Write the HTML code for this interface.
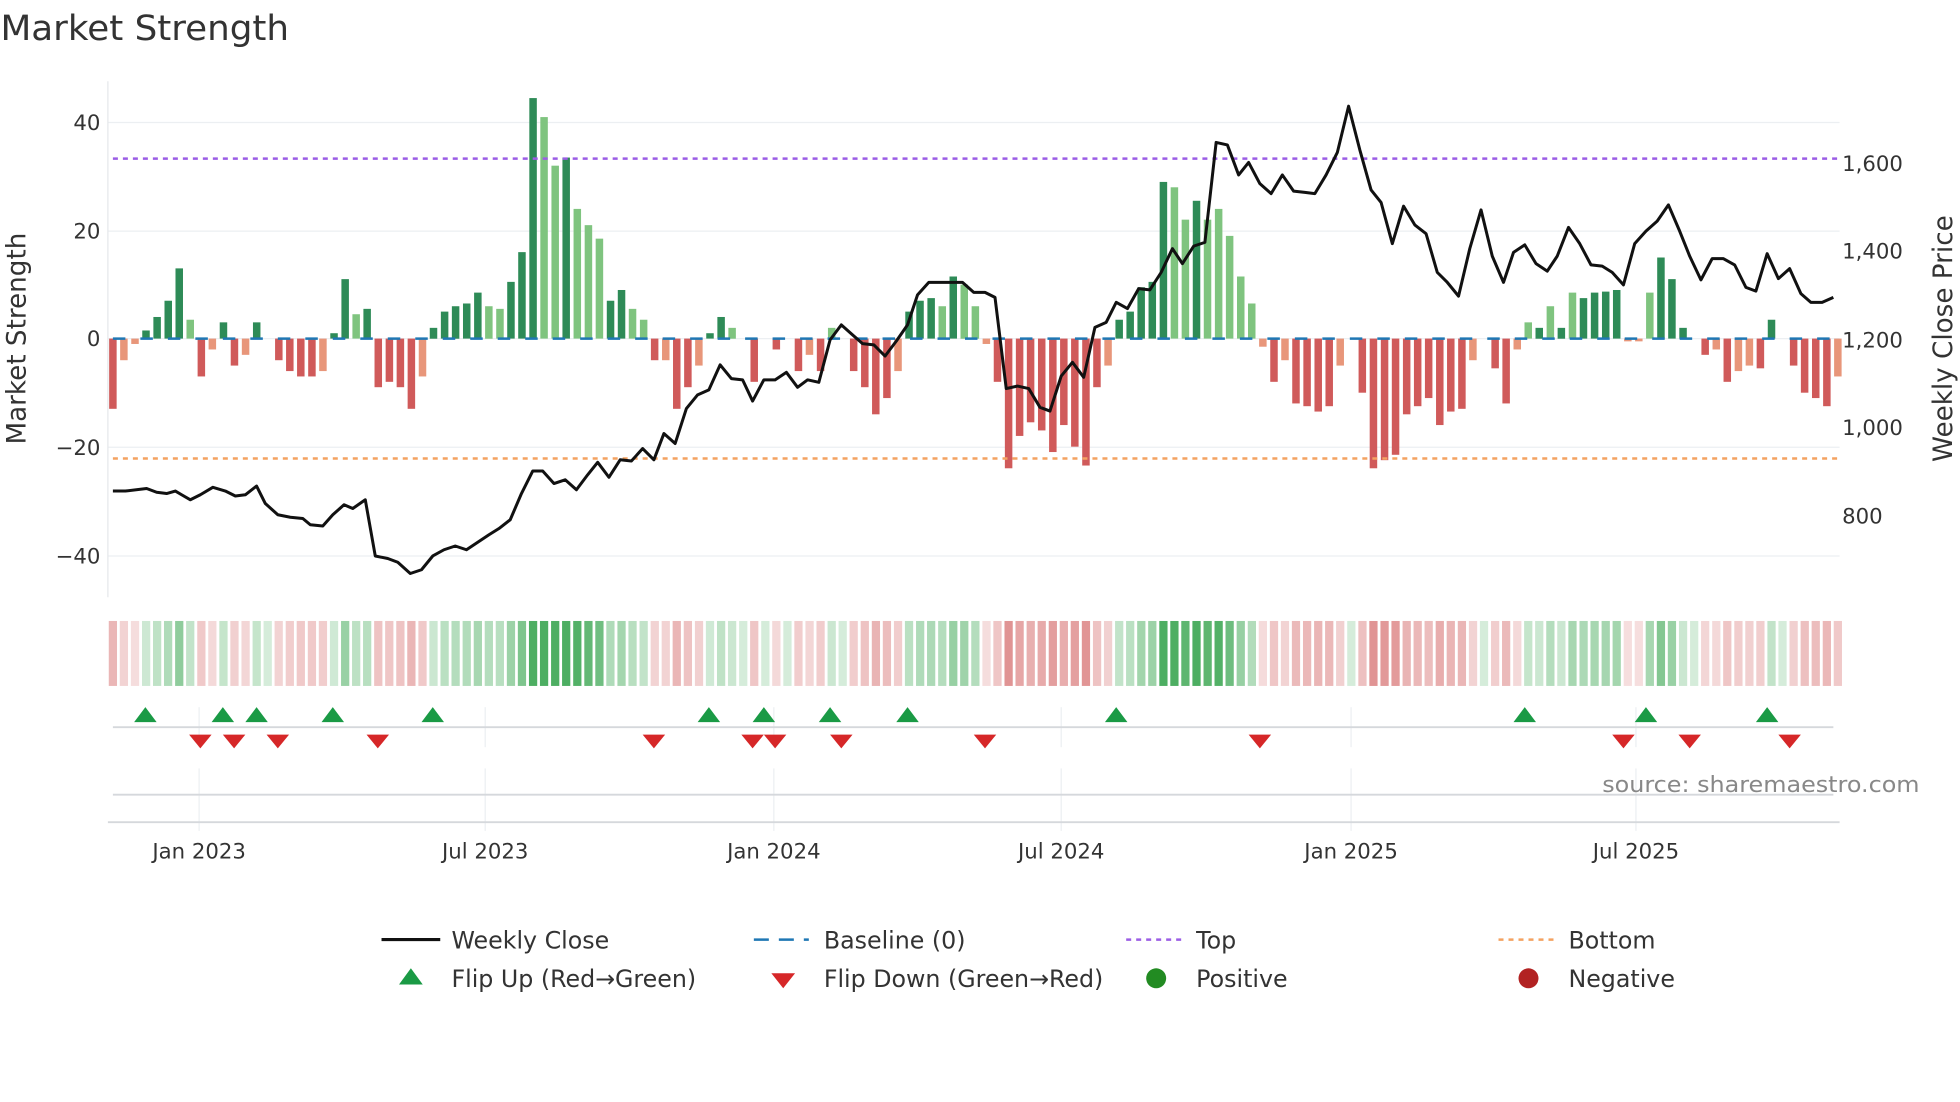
<!DOCTYPE html>
<html><head><meta charset="utf-8"><style>
html,body{margin:0;padding:0;background:#fff;width:1960px;height:1102px;overflow:hidden}
svg text{font-family:"DejaVu Sans","Liberation Sans",sans-serif;fill:#333}
</style></head><body>
<svg id="s" width="1960" height="1102" viewBox="0 0 1568 882" xmlns="http://www.w3.org/2000/svg"></svg>
<script>
var V=[-13,-4,-1,1.5,4,7,13,3.5,-7,-2,3,-5,-3,3,0,-4,-6,-7,-7,-6,1,11,4.5,5.5,-9,-8,-9,-13,-7,2,5,6,6.5,8.5,6,5.5,10.5,16,44.5,41,32,33.5,24,21,18.5,7,9,5.5,3.5,-4,-4,-13,-9,-5,1,4,2,0,-8,0,-2,0,-6,-3,-6,2,0,-6,-9,-14,-11,-6,5,7,7.5,6,11.5,10,6,-1,-8,-24,-18,-15.5,-17,-21,-16,-20,-23.5,-9,-5,3.5,5,9.5,10.5,29,28,22,25.5,22,24,19,11.5,6.5,-1.5,-8,-4,-12,-12.5,-13.5,-12.5,-5,0,-10,-24,-22.5,-21.5,-14,-12.5,-11,-16,-13.5,-13,-4,0,-5.5,-12,-2,3,2,6,2,8.5,7.5,8.5,8.7,9,-0.5,-0.5,8.5,15,11,2,0,-3,-2,-8,-6,-5,-5.5,3.5,0,-5,-10,-11,-12.5,-7];
var light={7:1,22:1,34:1,35:1,39:1,40:1,42:1,43:1,44:1,47:1,48:1,56:1,65:1,75:1,77:1,78:1,96:1,97:1,99:1,100:1,101:1,102:1,103:1,128:1,130:1,132:1,138:1,139:1};
var P=[[90,393],[100,393],[117,391],[125,394],[133,395],[140,393],[145,396],[152,400],[160,396],[170,390],[180,393],[188,397],[196,396],[205,389],[212,403],[222,412],[232,414],[242,415],[248,420],[258,421],[266,412],[275,404],[282,407],[292,400],[300,445],[310,447],[318,450],[328,459],[337,456],[346,445],[355,440],[364,437],[373,440],[382,434],[391,428],[399,423],[408,416],[417,395],[426,377],[434,377],[443,387],[452,384],[461,392],[470,380],[478,370],[487,382],[496,368],[505,369],[514,359],[523,368],[531,347],[540,355],[549,327],[558,316],[567,312],[576,292],[585,303],[594,304],[602,321],[611,304],[620,304],[629,298],[638,310],[646,304],[655,306],[664,272],[673,260],[682,268],[690,275],[699,276],[708,285],[717,273],[726,260],[734,236],[743,226],[752,226],[761,226],[770,226],[779,234],[788,234],[796,238],[805,311],[814,309],[823,311],[832,326],[840,329],[849,301],[858,290],[867,302],[876,262],[885,258],[893,242],[902,247],[911,231],[920,232],[929,218],[938,199],[946,211],[955,197],[964,194],[973,114],[982,116],[991,140],[999,130],[1008,147],[1017,155],[1026,140],[1035,153],[1044,154],[1052,155],[1061,140],[1070,122],[1079,85],[1088,120],[1097,152],[1105,162],[1114,195],[1123,165],[1132,180],[1141,187],[1150,218],[1158,226],[1167,237],[1176,199],[1185,168],[1194,205],[1203,226],[1211,202],[1220,196],[1229,211],[1238,217],[1246,205],[1255,182],[1264,195],[1273,212],[1282,213],[1290,218],[1299,228],[1308,195],[1317,185],[1326,177],[1335,164],[1344,185],[1352,205],[1361,224],[1370,207],[1379,207],[1388,212],[1397,230],[1405,233],[1414,203],[1423,223],[1432,215],[1441,235],[1449,242],[1458,242],[1467,238]];
var o='';
o+='<text x="0" y="32" font-size="28" textLength="231" lengthAdjust="spacingAndGlyphs">Market Strength</text>';
[98,185,271,358,445].forEach(function(y){o+='<line x1="86" x2="1472" y1="'+y+'" y2="'+y+'" stroke="#eceff2" stroke-width="1"/>';});
o+='<line x1="86" x2="86" y1="65" y2="478" stroke="#e6e8eb"/>';
var yl=[[98,'40'],[185,'20'],[271,'0'],[358,'−20'],[445,'−40']];
yl.forEach(function(a){o+='<text x="80" y="'+(a[0]+6)+'" font-size="17" text-anchor="end">'+a[1]+'</text>';});
[[131,'1,600'],[201,'1,400'],[272,'1,200'],[342,'1,000'],[413,'800']].forEach(function(a){o+='<text x="1474" y="'+(a[0]+6)+'" font-size="17">'+a[1]+'</text>';});
o+='<text transform="translate(20,271) rotate(-90)" font-size="21" text-anchor="middle">Market Strength</text>';
o+='<text transform="translate(1562,271) rotate(-90)" font-size="21" text-anchor="middle">Weekly Close Price</text>';
var k=4.325;
for(var i=0;i<V.length;i++){var v=V[i],x=90+i*8.85-3;var c;
 if(v>=0)c=light[i]?'#7fc47f':'#2e8b57';else c=(v<-7.5||[0,8,11,15,16,17,18,24,26,27,49,51,58,60,62,64,67,68,69,80,81,85,86,87,105,107,108,109,110,112,113,119,125,126,144,146,149,151,152,153,154].indexOf(i)>=0)?'#d05a5a':'#e8967a';
 var h=Math.abs(v)*k; var y=v>=0?271-h:271;
 o+='<rect x="'+x.toFixed(1)+'" y="'+y.toFixed(1)+'" width="6" height="'+h.toFixed(1)+'" fill="'+c+'"/>';
 var hc=v>=0?'rgba(46,160,70,'+(0.2+Math.min(v,25)/25*0.65)+')':'rgba(205,80,80,'+(0.18+Math.min(-v,25)/25*0.45)+')';
 o+='<rect x="'+(x-0.3).toFixed(1)+'" y="497" width="6.6" height="52" fill="'+hc+'"/>';
}
o+='<line x1="90" x2="1470" y1="271" y2="271" stroke="#1f77b4" stroke-width="2" stroke-dasharray="10,12"/>';
o+='<line x1="90" x2="1470" y1="127" y2="127" stroke="#9b5de5" stroke-width="2" stroke-dasharray="4,4"/>';
o+='<line x1="90" x2="1470" y1="367" y2="367" stroke="#f4a261" stroke-width="2" stroke-dasharray="4,4"/>';
o+='<polyline fill="none" stroke="#111" stroke-width="2.4" stroke-linejoin="round" points="'+P.map(function(p){return p.join(',')}).join(' ')+'"/>';
var mx=[[159,'Jan 2023'],[388,'Jul 2023'],[619,'Jan 2024'],[849,'Jul 2024'],[1081,'Jan 2025'],[1309,'Jul 2025']];
mx.forEach(function(m){o+='<line x1="'+m[0]+'" x2="'+m[0]+'" y1="566" y2="598" stroke="#eceff2"/><line x1="'+m[0]+'" x2="'+m[0]+'" y1="615" y2="665" stroke="#eceff2"/><text x="'+m[0]+'" y="687" font-size="17" text-anchor="middle">'+m[1]+'</text>';});
o+='<line x1="90" x2="1467" y1="582" y2="582" stroke="#d5d8dc" stroke-width="1.5"/>';
o+='<line x1="90" x2="1467" y1="636" y2="636" stroke="#d5d8dc" stroke-width="1.5"/>';
o+='<line x1="86" x2="1472" y1="658" y2="658" stroke="#d5d8dc" stroke-width="1.5"/>';
[116,178,205,266,346,567,611,664,726,893,1220,1317,1414].forEach(function(x){o+='<polygon points="'+(x-9)+',578 '+(x+9)+',578 '+x+',566" fill="#1a9a45"/>';});
[160,187,222,302,523,602,620,673,788,1008,1299,1352,1432].forEach(function(x){o+='<polygon points="'+(x-9)+',588 '+(x+9)+',588 '+x+',599" fill="#d62728"/>';});
o+='<text x="1536" y="634" font-size="18" text-anchor="end" textLength="254" lengthAdjust="spacingAndGlyphs" style="fill:#888">source: sharemaestro.com</text>';
function lt(x,y,t){o+='<text x="'+x+'" y="'+(y+7)+'" font-size="19">'+t+'</text>';}
o+='<line x1="305" x2="352" y1="752" y2="752" stroke="#111" stroke-width="2.5"/>';lt(361,752,'Weekly Close');
o+='<line x1="603" x2="647" y1="752" y2="752" stroke="#1f77b4" stroke-width="2" stroke-dasharray="12,8"/>';lt(659,752,'Baseline (0)');
o+='<line x1="901" x2="945" y1="752" y2="752" stroke="#9b5de5" stroke-width="2" stroke-dasharray="4,4"/>';lt(957,752,'Top');
o+='<line x1="1199" x2="1243" y1="752" y2="752" stroke="#f4a261" stroke-width="2" stroke-dasharray="4,4"/>';lt(1255,752,'Bottom');
o+='<polygon points="319,788 338,788 328.5,775" fill="#1a9a45"/>';lt(361,783,'Flip Up (Red→Green)');
o+='<polygon points="617,779 636,779 626.5,791" fill="#d62728"/>';lt(659,783,'Flip Down (Green→Red)');
o+='<circle cx="925" cy="783" r="8" fill="#228b22"/>';lt(957,783,'Positive');
o+='<circle cx="1223" cy="783" r="8" fill="#b22222"/>';lt(1255,783,'Negative');
document.getElementById('s').innerHTML=o;
</script>
</body></html>
